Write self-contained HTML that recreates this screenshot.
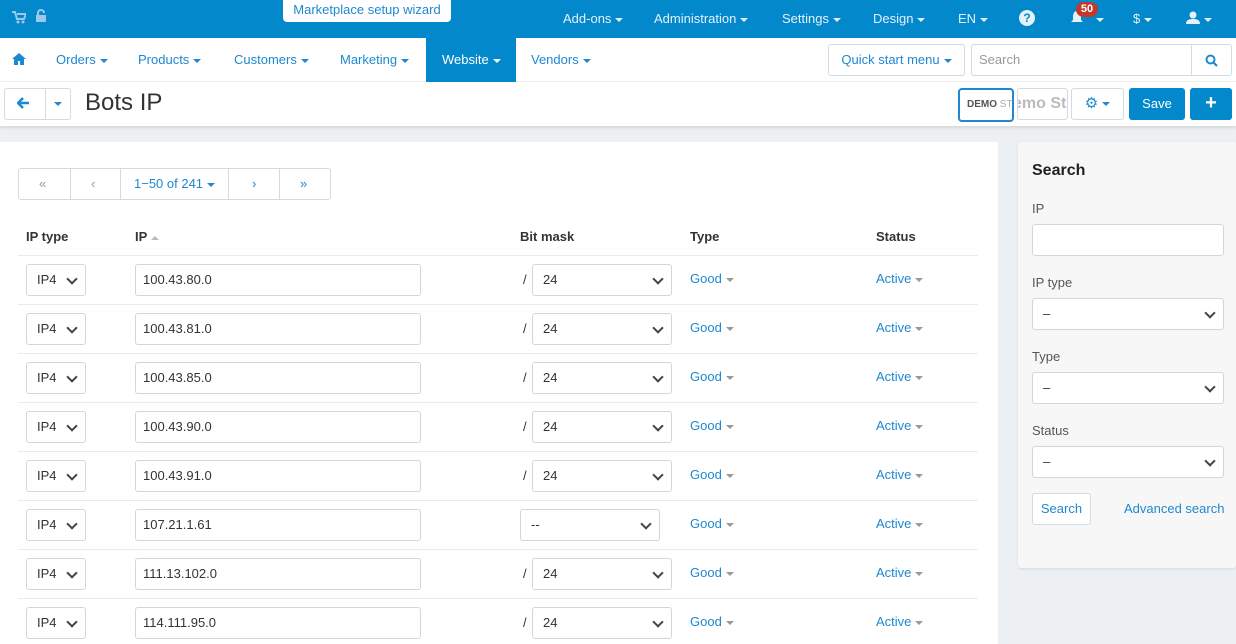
<!DOCTYPE html>
<html><head><meta charset="utf-8"><style>
*{box-sizing:border-box;margin:0;padding:0}
body{width:1236px;height:644px;overflow:hidden;font-family:"Liberation Sans",Arial,sans-serif;font-size:13px;color:#333;background:#edf0f2;position:relative}
.a{position:absolute}
.top{left:0;top:0;width:1236px;height:38px;background:#0388cc}
.tl{color:#e3f1fa;font-size:13px;top:11px}
.car{display:inline-block;width:0;height:0;border-left:4px solid transparent;border-right:4px solid transparent;border-top:4px solid currentColor;vertical-align:middle;margin-left:4px}
.nav{left:0;top:38px;width:1236px;height:44px;background:#fff;border-bottom:1px solid #eee}
.nl{color:#1e88d0;top:14px;font-size:13px}
.hdr{left:0;top:82px;width:1236px;height:44px;background:#fff;box-shadow:0 2px 3px rgba(0,0,0,.1)}
.btn{border:1px solid #d3dbe2;border-radius:3px;background:#fff}
.panel{left:0;top:142px;width:998px;height:502px;background:#fff}
.side{left:1018px;top:142px;width:218px;height:426px;background:#f7f7f7;border-radius:3px;box-shadow:0 1px 2px rgba(0,0,0,.1)}
.inp{border:1px solid #cfd7de;border-radius:3px;background:#fff;height:32px}
.sel::after{content:"";position:absolute;right:9px;top:10px;width:6px;height:6px;border-right:2px solid #444;border-bottom:2px solid #444;transform:rotate(45deg)}
.th{top:229px;font-weight:bold;font-size:13px;color:#333}
.lnk{color:#1e88d0}
.gc{display:inline-block;border-left:4px solid transparent;border-right:4px solid transparent;border-top:4px solid #999;vertical-align:middle;margin-left:4px}
.rl{left:18px;width:960px;height:1px;background:#e8ecef}
.lbl{font-size:13px;color:#555}
</style></head><body>
<div class="a top"></div>
<svg class="a" style="left:12px;top:11px" width="14" height="13" viewBox="0 0 14 13"><path d="M0 1h3l2 7h7l2-5H5" fill="none" stroke="#9cc9e8" stroke-width="2"/><circle cx="6" cy="11" r="1.5" fill="#9cc9e8"/><circle cx="11" cy="11" r="1.5" fill="#9cc9e8"/></svg>
<svg class="a" style="left:36px;top:9px" width="10" height="14" viewBox="0 0 10 14"><path d="M2 6V4a3 3 0 0 1 6 0" fill="none" stroke="#9cc9e8" stroke-width="2"/><rect x="0" y="6" width="10" height="7" fill="#9cc9e8"/></svg>
<div class="a" style="left:283px;top:0;width:168px;height:22px;background:#fff;border-radius:0 0 4px 4px;color:#1e88d0;text-align:center;line-height:20px;font-size:13px">Marketplace setup wizard</div>
<div class="a tl" style="left:563px">Add-ons<span class="car"></span></div>
<div class="a tl" style="left:654px">Administration<span class="car"></span></div>
<div class="a tl" style="left:782px">Settings<span class="car"></span></div>
<div class="a tl" style="left:873px">Design<span class="car"></span></div>
<div class="a tl" style="left:958px">EN<span class="car"></span></div>
<div class="a" style="left:1019px;top:10px;width:16px;height:16px;border-radius:50%;background:#e3f1fa;color:#0388cc;font-weight:bold;font-size:12px;text-align:center;line-height:16px">?</div>
<svg class="a" style="left:1070px;top:10px" width="14" height="15" viewBox="0 0 14 15"><path d="M7 1C4 1 3 4 3 7v3L1 12h12l-2-2V7c0-3-1-6-4-6z" fill="#e3f1fa"/></svg>
<div class="a" style="left:1076px;top:2px;width:22px;height:15px;border-radius:8px;background:#c0392b;color:#fff;font-size:11px;font-weight:bold;text-align:center;line-height:15px">50</div>
<div class="a tl" style="left:1092px"><span class="car"></span></div>
<div class="a tl" style="left:1133px">$<span class="car"></span></div>
<svg class="a" style="left:1186px;top:11px" width="14" height="13" viewBox="0 0 14 13"><circle cx="7" cy="4" r="3.5" fill="#e3f1fa"/><path d="M0 13c0-4 3-5 7-5s7 1 7 5z" fill="#e3f1fa"/></svg>
<div class="a tl" style="left:1200px"><span class="car"></span></div>

<div class="a nav"></div>
<svg class="a" style="left:12px;top:53px" width="14" height="12" viewBox="0 0 14 12"><path d="M7 0L0 6h2v6h4V8h2v4h4V6h2z" fill="#1e88d0"/></svg>
<div class="a nl" style="left:56px;top:52px">Orders<span class="car"></span></div>
<div class="a nl" style="left:138px;top:52px">Products<span class="car"></span></div>
<div class="a nl" style="left:234px;top:52px">Customers<span class="car"></span></div>
<div class="a nl" style="left:340px;top:52px">Marketing<span class="car"></span></div>
<div class="a" style="left:426px;top:38px;width:90px;height:44px;background:#0388cc"></div>
<div class="a nl" style="left:442px;top:52px;color:#fff">Website<span class="car"></span></div>
<div class="a nl" style="left:531px;top:52px">Vendors<span class="car"></span></div>
<div class="a btn" style="left:828px;top:44px;width:137px;height:32px;color:#1e88d0;line-height:30px;text-align:center">Quick start menu<span class="car"></span></div>
<div class="a btn" style="left:971px;top:44px;width:261px;height:32px;color:#999;line-height:30px;padding-left:7px">Search</div>
<div class="a" style="left:1191px;top:45px;width:1px;height:30px;background:#d3dbe2"></div>
<svg class="a" style="left:1205px;top:54px" width="13" height="13" viewBox="0 0 13 13"><circle cx="5.5" cy="5.5" r="4" fill="none" stroke="#1e88d0" stroke-width="2"/><path d="M8.5 8.5L12 12" stroke="#1e88d0" stroke-width="2.2"/></svg>

<div class="a hdr"></div>
<div class="a btn" style="left:4px;top:88px;width:67px;height:32px"></div>
<div class="a" style="left:45px;top:89px;width:1px;height:30px;background:#d3dbe2"></div>
<svg class="a" style="left:17px;top:97px" width="13" height="12" viewBox="0 0 13 12"><path d="M6 1L1 6l5 5M1 6h11" fill="none" stroke="#1e88d0" stroke-width="2.5"/></svg>
<div class="a" style="left:54px;top:102px;border-left:4px solid transparent;border-right:4px solid transparent;border-top:4px solid #1e88d0"></div>
<div class="a" style="left:85px;top:89px;font-size:24px;color:#333">Bots IP</div>
<div class="a" style="left:958px;top:88px;width:56px;height:34px;border:2px solid #1e88d0;border-radius:4px;background:#fff;overflow:hidden;font-size:10px;font-weight:bold;color:#555;line-height:30px;padding-left:7px;white-space:nowrap">DEMO <span style="color:#aaa;font-weight:normal">STO</span></div>
<div class="a btn" style="left:1017px;top:88px;width:51px;height:32px;overflow:hidden;font-size:16px;font-weight:bold;color:#bbb;line-height:30px;white-space:nowrap;text-indent:-5px">emo Sto</div>
<div class="a btn" style="left:1071px;top:88px;width:53px;height:32px;color:#1e88d0;line-height:30px;text-align:center;font-size:15px">⚙<span class="car"></span></div>
<div class="a" style="left:1129px;top:88px;width:56px;height:32px;background:#0388cc;border-radius:3px;color:#fff;text-align:center;line-height:32px">Save</div>
<div class="a" style="left:1190px;top:88px;width:42px;height:32px;background:#0388cc;border-radius:3px;color:#fff;text-align:center;line-height:30px;font-size:20px;font-weight:bold">+</div>

<div class="a panel"></div>
<div class="a btn" style="left:18px;top:168px;width:313px;height:32px"></div>
<div class="a" style="left:70px;top:169px;width:1px;height:30px;background:#d3dbe2"></div>
<div class="a" style="left:120px;top:169px;width:1px;height:30px;background:#d3dbe2"></div>
<div class="a" style="left:228px;top:169px;width:1px;height:30px;background:#d3dbe2"></div>
<div class="a" style="left:279px;top:169px;width:1px;height:30px;background:#d3dbe2"></div>
<div class="a" style="left:39px;top:176px;color:#999">«</div>
<div class="a" style="left:91px;top:176px;color:#999">‹</div>
<div class="a lnk" style="left:134px;top:176px">1−50 of 241<span class="car"></span></div>
<div class="a lnk" style="left:252px;top:176px">›</div>
<div class="a lnk" style="left:300px;top:176px">»</div>

<div class="a th" style="left:26px">IP type</div>
<div class="a th" style="left:135px">IP<span class="gc" style="border-top:0;border-bottom:4px solid #bbb"></span></div>
<div class="a th" style="left:520px">Bit mask</div>
<div class="a th" style="left:690px">Type</div>
<div class="a th" style="left:876px">Status</div>

<div id="rows"></div>

<div class="a side"></div>
<div class="a" style="left:1032px;top:162px;font-size:16px;font-weight:bold;color:#222">Search</div>
<div class="a lbl" style="left:1032px;top:201px">IP</div>
<div class="a inp" style="left:1032px;top:224px;width:192px"></div>
<div class="a lbl" style="left:1032px;top:275px">IP type</div>
<div class="a inp sel" style="left:1032px;top:298px;width:192px;padding:7px 10px">–</div>
<div class="a lbl" style="left:1032px;top:349px">Type</div>
<div class="a inp sel" style="left:1032px;top:372px;width:192px;padding:7px 10px">–</div>
<div class="a lbl" style="left:1032px;top:423px">Status</div>
<div class="a inp sel" style="left:1032px;top:446px;width:192px;padding:7px 10px">–</div>
<div class="a btn" style="left:1032px;top:493px;width:59px;height:32px;color:#1e88d0;text-align:center;line-height:30px">Search</div>
<div class="a lnk" style="left:1124px;top:501px">Advanced search</div>

<script>
var ips=["100.43.80.0","100.43.81.0","100.43.85.0","100.43.90.0","100.43.91.0","107.21.1.61","111.13.102.0","114.111.95.0"];
var h="";
ips.forEach(function(ip,i){
 var t=255+49*i, y=t+9;
 h+='<div class="a rl" style="top:'+t+'px"></div>';
 h+='<div class="a inp sel" style="left:26px;top:'+y+'px;width:60px;padding:7px 10px">IP4</div>';
 h+='<div class="a inp" style="left:135px;top:'+y+'px;width:286px;padding:7px 7px">'+ip+'</div>';
 if(i==5){h+='<div class="a inp sel" style="left:520px;top:'+y+'px;width:140px;padding:7px 10px">--</div>';}
 else{h+='<div class="a" style="left:523px;top:'+(y+8)+'px">/</div><div class="a inp sel" style="left:532px;top:'+y+'px;width:140px;padding:7px 10px">24</div>';}
 h+='<div class="a lnk" style="left:690px;top:'+(y+7)+'px">Good<span class="gc"></span></div>';
 h+='<div class="a lnk" style="left:876px;top:'+(y+7)+'px">Active<span class="gc"></span></div>';
});
document.getElementById("rows").outerHTML=h;
</script>
</body></html>
